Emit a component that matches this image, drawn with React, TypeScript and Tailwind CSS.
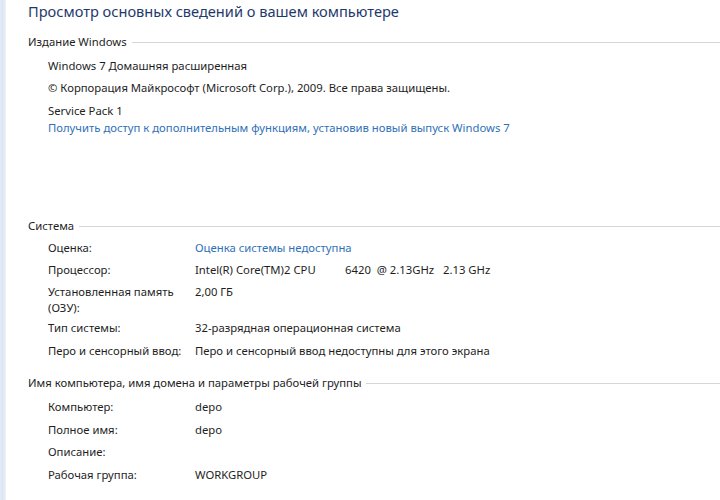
import React from "react";

const font = { fontFamily: '"Noto Sans", "Open Sans", sans-serif' };

function Header({ text, className }: { text: string; className: string }) {
  return (
    <div className={`flex items-center h-[16px] ${className}`}>
      <span className="text-[11.3px] leading-[16px] text-[#1e1e1e] whitespace-nowrap pr-[5px]">{text}</span>
      <div className="flex-1 h-px bg-[#d6d6d6]" />
    </div>
  );
}

function Row({ label, value, className, link }: { label: React.ReactNode; value?: React.ReactNode; className: string; link?: boolean }) {
  return (
    <div className={`flex pl-[20px] text-[11.3px] leading-[16px] ${className}`}>
      <div className="w-[147px] shrink-0 text-[#1e1e1e]">{label}</div>
      <div className={link ? "text-[#2f70b8] whitespace-nowrap" : "text-[#1e1e1e] whitespace-pre"}>{value}</div>
    </div>
  );
}

export default function App() {
  return (
    <div className="w-[720px] h-[500px] flex bg-white overflow-hidden" style={font}>
      <div className="w-[6px] shrink-0 bg-gradient-to-r from-[#e3ebf6] via-[#dbe6f3] to-[#eef3fa]" />
      <div className="flex-1 flex flex-col pl-[22px]">
        <div className="h-[22px] leading-[22px] text-[14.6px] text-[#1e3a6c] whitespace-nowrap">
          Просмотр основных сведений о вашем компьютере
        </div>
        <Header text="Издание Windows" className="mt-[12px]" />
        <div className="pl-[20px] text-[11.3px] leading-[16px] text-[#1e1e1e] flex flex-col">
          <div className="mt-[8px]">Windows 7 Домашняя расширенная</div>
          <div className="mt-[6px]">© Корпорация Майкрософт (Microsoft Corp.), 2009. Все права защищены.</div>
          <div className="mt-[7px]">Service Pack 1</div>
          <div className="mt-[1px] text-[#2f70b8] whitespace-nowrap">Получить доступ к дополнительным функциям, установив новый выпуск Windows 7</div>
        </div>
        <Header text="Система" className="mt-[82px]" />
        <Row className="mt-[6px]" label="Оценка:" value="Оценка системы недоступна" link />
        <Row className="mt-[6px]" label="Процессор:" value={"Intel(R) Core(TM)2 CPU          6420  @ 2.13GHz   2.13 GHz"} />
        <Row className="mt-[6px]" label={<>Установленная память<br />(ОЗУ):</>} value="2,00 ГБ" />
        <Row className="mt-[4px]" label="Тип системы:" value="32-разрядная операционная система" />
        <Row className="mt-[7px]" label="Перо и сенсорный ввод:" value="Перо и сенсорный ввод недоступны для этого экрана" />
        <Header text="Имя компьютера, имя домена и параметры рабочей группы" className="mt-[16px]" />
        <Row className="mt-[8px]" label="Компьютер:" value="depo" />
        <Row className="mt-[7px]" label="Полное имя:" value="depo" />
        <Row className="mt-[6px]" label="Описание:" value="" />
        <Row className="mt-[7px]" label="Рабочая группа:" value="WORKGROUP" />
      </div>
    </div>
  );
}
